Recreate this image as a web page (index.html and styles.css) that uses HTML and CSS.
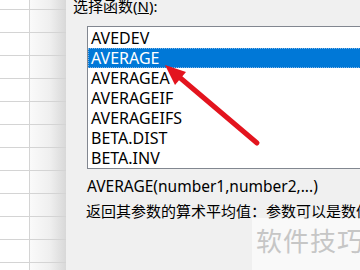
FILE: index.html
```html
<!DOCTYPE html>
<html>
<head>
<meta charset="utf-8">
<link rel="stylesheet" href="styles.css">
</head>
<body>
<div class="screen">
  <div class="sheet">
    <div class="row first"></div>
    <div class="row"></div><div class="row"></div><div class="row"></div>
    <div class="row"></div><div class="row"></div><div class="row"></div>
    <div class="row"></div><div class="row"></div><div class="row"></div>
    <div class="row"></div><div class="row"></div><div class="row"></div>
  </div>
  <div class="dialog">
    <div class="label">选择函数(<u>N</u>):</div>
    <div class="listbox">
      <div class="item">AVEDEV</div>
      <div class="item selected">AVERAGE</div>
      <div class="item">AVERAGEA</div>
      <div class="item">AVERAGEIF</div>
      <div class="item">AVERAGEIFS</div>
      <div class="item">BETA.DIST</div>
      <div class="item">BETA.INV</div>
    </div>
    <div class="syntax">AVERAGE(number1,number2,...)</div>
    <div class="desc">返回其参数的算术平均值：参数可以是数值或包含数值的名称、数组或引用</div>
  </div>
  <div class="watermark">软件技巧</div>
  <svg class="arrow" width="360" height="270" viewBox="0 0 360 270">
    <line x1="257" y1="143" x2="178" y2="76" stroke="#e3141e" stroke-width="5" stroke-linecap="round"/>
    <polygon points="165,65 186,72 175,85" fill="#e3141e"/>
  </svg>
</div>
</body>
</html>
```

FILE: styles.css
```css
* { box-sizing: border-box; }
html, body { margin: 0; padding: 0; }
body {
  width: 360px;
  height: 270px;
  overflow: hidden;
  font-family: "Noto Sans", "Noto Sans CJK SC", sans-serif;
  color: #000;
}
.screen {
  position: relative;
  width: 360px;
  height: 270px;
  display: flex;
  overflow: hidden;
}
.sheet {
  width: 66px;
  flex: none;
  display: flex;
  flex-direction: column;
  background:
    linear-gradient(to right, transparent 0, transparent 30px, rgba(230,230,230,0.2) 30px, rgba(215,215,215,0.4) 50px, rgba(195,195,195,0.65) 66px),
    #fff;
  position: relative;
}
.sheet::after {
  content: "";
  position: absolute;
  left: 29px;
  top: 0;
  bottom: 0;
  width: 1px;
  background: #d4d4d4;
}
.row {
  height: 23px;
  flex: none;
  border-bottom: 1px solid #d4d4d4;
}
.row.first { height: 10px; }
.dialog {
  flex: 1;
  background: #f0f0f0;
  padding-left: 7px;
  min-width: 0;
}
.label {
  font-size: 15px;
  line-height: 20px;
  margin-top: -4px;
  height: 30px;
  white-space: nowrap;
}
.label u { text-decoration-thickness: 1px; }
.listbox {
  margin-left: 14px;
  margin-right: -20px;
  border: 1px solid #828790;
  background: #fff;
  padding-top: 1px;
  height: 143px;
}
.item {
  height: 20px;
  line-height: 20px;
  font-size: 16px;
  padding-left: 3px;
  white-space: nowrap;
}
.item.selected {
  background: #0078d7;
  color: #fff;
  outline: 1px dotted #7fb4e6;
  outline-offset: -1px;
}
.syntax {
  margin-left: 14px;
  margin-top: 7px;
  font-size: 15.5px;
  line-height: 20px;
  white-space: nowrap;
}
.desc {
  margin-left: 13px;
  margin-top: 5px;
  font-size: 15px;
  line-height: 20px;
  white-space: nowrap;
}
.watermark {
  position: absolute;
  left: 252px;
  top: 218px;
  width: 120px;
  height: 60px;
  background: rgba(255,255,255,0.6);
  color: #c6c6c6;
  font-family: "Noto Sans CJK SC", sans-serif;
  font-size: 26px;
  line-height: 44px;
  padding-left: 4px;
  letter-spacing: 1px;
  white-space: nowrap;
}
.arrow {
  position: absolute;
  left: 0;
  top: 0;
}
```
